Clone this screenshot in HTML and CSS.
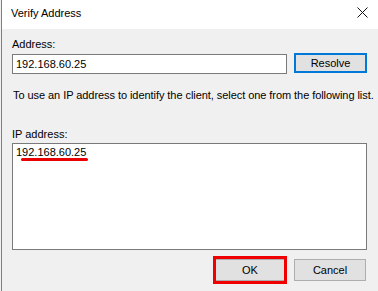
FILE: index.html
```html
<!DOCTYPE html>
<html lang="en">
<head>
<meta charset="UTF-8">
<meta name="viewport" content="width=device-width, initial-scale=1.0">
<title>Verify Address</title>
<link rel="stylesheet" href="styles.css">
</head>
<body>
  <div class="window">
    <div class="titlebar">
      <span class="title">Verify Address</span>
      <svg class="close" width="11" height="11" viewBox="0 0 11 11">
        <path d="M0.5 0.5 L10.5 10.5 M10.5 0.5 L0.5 10.5" stroke="#111" stroke-width="1" fill="none"/>
      </svg>
    </div>
    <div class="content">
      <div class="label">Address:</div>
      <div class="address-row">
        <div class="textbox">192.168.60.25</div>
        <button class="btn btn-default">Resolve</button>
      </div>
      <p class="hint">To use an IP address to identify the client, select one from the following list.</p>
      <div class="label label-ip">IP address:</div>
      <div class="listbox">
        <div class="list-item">192.168.60.25</div>
        <div class="mark"></div>
      </div>
      <div class="footer">
        <div class="highlight">
          <button class="btn btn-ok">OK</button>
        </div>
        <button class="btn btn-cancel">Cancel</button>
      </div>
    </div>
  </div>
</body>
</html>
```

FILE: styles.css
```css
body {
  margin: 0;
  padding: 0;
  background-color: #f0f0f0;
  font-family: "Liberation Sans", Arial, sans-serif;
  font-size: 11px;
  color: #000;
}

.window {
  margin-left: 1px;
  border-left: 1px solid #7f7f7f;
  background-color: #f0f0f0;
  height: 291px;
  overflow: hidden;
}

.titlebar {
  height: 29px;
  background-color: #fff;
  display: flex;
  align-items: center;
  justify-content: space-between;
  padding: 0 10px 0 9px;
}

.title {
  font-size: 11px;
  margin-top: -3px;
}

.close {
  margin-top: -5px;
}

.content {
  padding: 9px 11px 0 10px;
}

.label {
  line-height: 13px;
  height: 13px;
}

.address-row {
  display: flex;
  align-items: flex-start;
  margin-top: 3px;
}

.textbox {
  flex: 1;
  height: 18px;
  line-height: 18px;
  border: 1px solid #7a7a7a;
  background-color: #fff;
  padding-left: 3px;
}

.btn {
  font-family: "Liberation Sans", Arial, sans-serif;
  font-size: 11px;
  color: #000;
  background-color: #e1e1e1;
  border: 1px solid #adadad;
  padding: 0;
  margin: 0;
}

.btn-default {
  width: 73px;
  height: 20px;
  margin-left: 7px;
  margin-top: -1px;
  border: 2px solid #0078d7;
}

.hint {
  margin: 15px 0 0 1px;
  line-height: 13px;
  white-space: nowrap;
  letter-spacing: -0.06px;
}

.label-ip {
  margin-top: 26px;
}

.listbox {
  position: relative;
  margin-top: 2px;
  height: 105px;
  border: 1px solid #7a7a7a;
  background-color: #fff;
}

.list-item {
  padding: 2px 0 0 3px;
  line-height: 13px;
}

.mark {
  position: absolute;
  left: 8px;
  top: 14px;
  width: 67px;
  height: 3px;
  border-radius: 2px;
  background-color: #ea0000;
}

.footer {
  display: flex;
  justify-content: flex-end;
  align-items: center;
  margin-top: 6px;
  padding-right: 1px;
}

.highlight {
  border: 3px solid #f00000;
  width: 68px;
  height: 22px;
}

.btn-ok {
  width: 68px;
  height: 22px;
  border-left: none;
  border-right: none;
}

.btn-cancel {
  width: 72px;
  height: 22px;
  margin-left: 7px;
}
```
